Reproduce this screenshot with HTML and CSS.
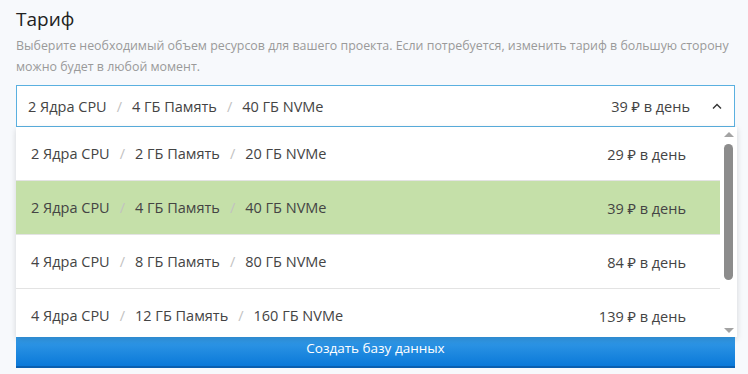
FILE: index.html
```html
<!DOCTYPE html>
<html lang="ru">
<head>
    <meta charset="UTF-8">
    <meta name="viewport" content="width=device-width, initial-scale=1.0">
    <title>Тариф</title>
    <link rel="stylesheet" href="styles.css">
</head>
<body>

    <div class="section">
        <h2>Тариф</h2>
        <p class="hint">Выберите необходимый объем ресурсов для вашего проекта. Если потребуется, изменить тариф в большую сторону можно будет в любой момент.</p>

        <div class="select">
            <div class="select-value">
                <span class="plan">2 Ядра CPU<i>/</i>4 ГБ Память<i>/</i>40 ГБ NVMe</span>
                <span class="price">39 ₽ в день</span>
                <svg class="chevron" width="10" height="6" viewBox="0 0 10 6"><path d="M1 5.5 L5 1.5 L9 5.5" fill="none" stroke="#333" stroke-width="1.4"/></svg>
            </div>

            <!-- выпадающий список тарифов -->
            <div class="dropdown">
                <div class="options">
                    <div class="option">
                        <span class="plan">2 Ядра CPU<i>/</i>2 ГБ Память<i>/</i>20 ГБ NVMe</span>
                        <span class="price">29 ₽ в день</span>
                    </div>
                    <div class="option active">
                        <span class="plan">2 Ядра CPU<i>/</i>4 ГБ Память<i>/</i>40 ГБ NVMe</span>
                        <span class="price">39 ₽ в день</span>
                    </div>
                    <div class="option">
                        <span class="plan">4 Ядра CPU<i>/</i>8 ГБ Память<i>/</i>80 ГБ NVMe</span>
                        <span class="price">84 ₽ в день</span>
                    </div>
                    <div class="option">
                        <span class="plan">4 Ядра CPU<i>/</i>12 ГБ Память<i>/</i>160 ГБ NVMe</span>
                        <span class="price">139 ₽ в день</span>
                    </div>
                </div>
                <div class="scrollbar">
                    <span class="arrow up"></span>
                    <span class="thumb"></span>
                    <span class="arrow down"></span>
                </div>
            </div>
        </div>

        <button class="button">Создать базу данных</button>
    </div>

</body>
</html>
```

FILE: styles.css
```css
body {
    font-family: 'Open Sans', 'Noto Sans', sans-serif;
    background-color: #f7f9fc;
    color: #333;
    margin: 0;
    padding: 0;
}

.section {
    padding: 5px 13px 0 16px;
}

h2 {
    font-size: 19px;
    font-weight: 400;
    color: #222;
    margin: 0;
    line-height: 28px;
}

.hint {
    font-size: 12.4px;
    line-height: 21px;
    color: #9a9a9a;
    margin: 2px 0 0;
}

.select {
    position: relative;
    margin-top: 8px;
}

.select-value {
    display: flex;
    align-items: center;
    height: 40px;
    padding: 0 12px 0 11px;
    background-color: #fff;
    border: 1px solid #5ab0e0;
    font-size: 14.5px;
    color: #444;
}

.plan i {
    font-style: normal;
    color: #c2c2c2;
    margin: 0 10px;
}

.price {
    margin-left: auto;
    color: #444;
}

.chevron {
    margin-left: 22px;
}

.dropdown {
    position: absolute;
    top: 42px;
    left: 0;
    right: -2px;
    height: 210px;
    display: flex;
    background-color: #fff;
    box-shadow: 0 2px 6px rgba(0, 0, 0, 0.15);
    overflow: hidden;
    z-index: 2;
}

.options {
    flex: 1;
}

.option {
    display: flex;
    align-items: center;
    height: 53px;
    padding: 0 34px 0 15px;
    border-bottom: 1px solid #e3e3e3;
    font-size: 14.5px;
    color: #444;
}

.option.active {
    background-color: #c5e0a9;
}

.scrollbar {
    width: 17px;
    display: flex;
    flex-direction: column;
    align-items: center;
    padding: 5px 0 4px;
}

.arrow {
    width: 0;
    height: 0;
    border-left: 5px solid transparent;
    border-right: 5px solid transparent;
}

.arrow.up {
    border-bottom: 5px solid #a3a3a3;
}

.arrow.down {
    border-top: 5px solid #a3a3a3;
    margin-top: auto;
}

.thumb {
    width: 9px;
    height: 136px;
    margin-top: 7px;
    background-color: #8c8c8c;
    border-radius: 5px;
}

.button {
    display: block;
    width: 100%;
    margin-top: 199px;
    height: 42px;
    padding-top: 4px;
    background: linear-gradient(#45a8ec, #0b79d9);
    border: none;
    border-bottom: 2px solid #0a5fb0;
    color: #fff;
    font-family: 'Open Sans', 'Noto Sans', sans-serif;
    font-size: 13.5px;
    cursor: pointer;
}
```
